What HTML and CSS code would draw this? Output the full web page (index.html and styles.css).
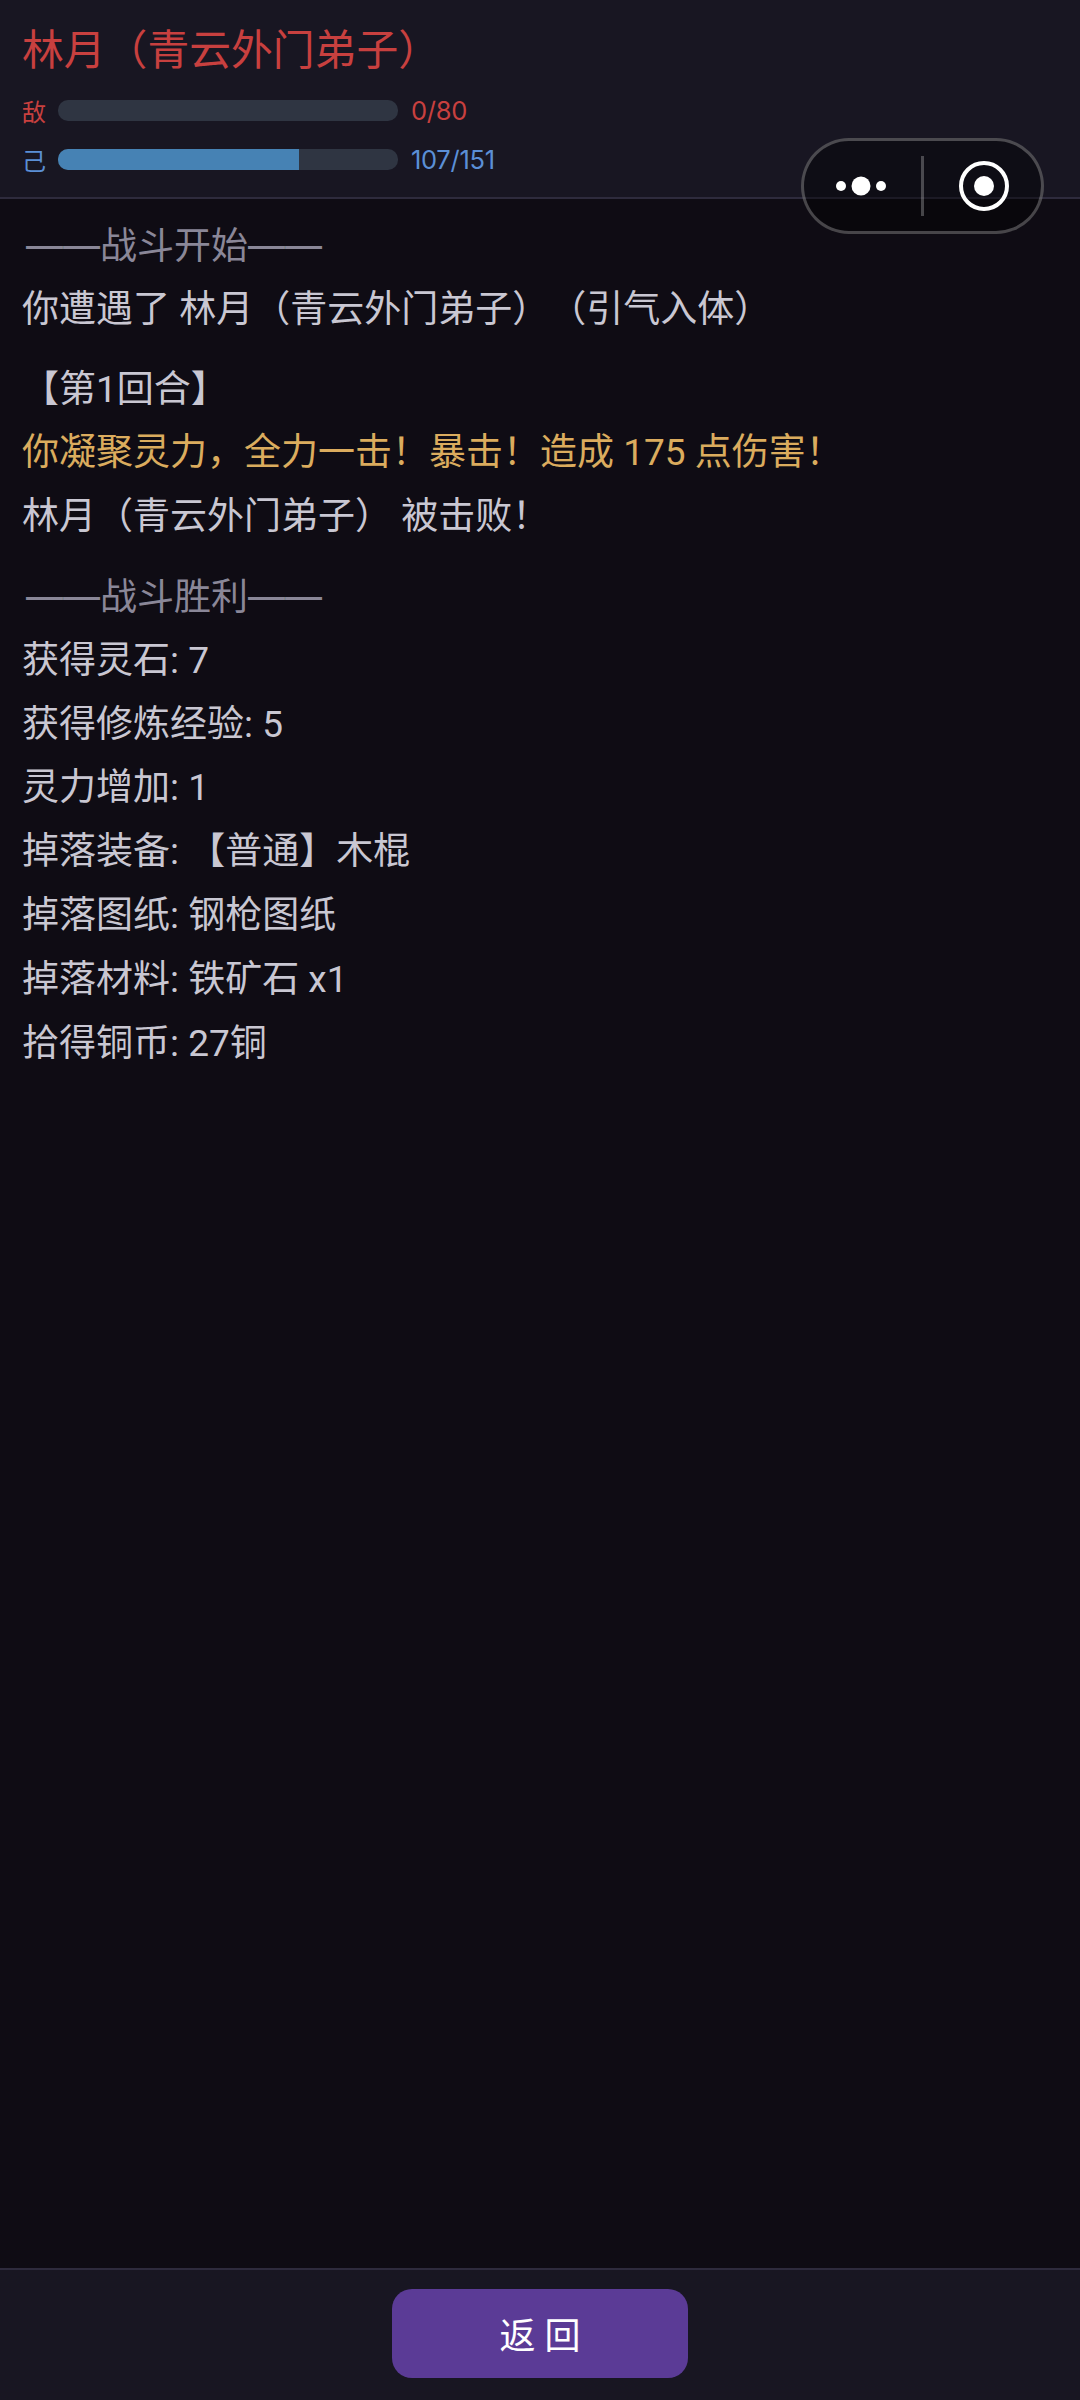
FILE: index.html
```html
<!DOCTYPE html>
<html lang="zh-CN">
<head>
    <meta charset="UTF-8">
    <meta name="viewport" content="width=device-width, initial-scale=1.0">
    <title>战斗</title>
    <link rel="stylesheet" href="styles.css">
</head>
<body>

    <div class="battle-page">
        <div class="enemy-header">
            <div class="enemy-name">林月（青云外门弟子）</div>
            <div class="hp-row enemy-row">
                <span class="hp-label">敌</span>
                <div class="hp-bar"></div>
                <span class="hp-value">0/80</span>
            </div>
            <div class="hp-row player-row">
                <span class="hp-label">己</span>
                <div class="hp-bar"><div class="hp-fill" style="width: 70.9%"></div></div>
                <span class="hp-value">107/151</span>
            </div>
        </div>

        <div class="capsule">
            <svg class="capsule-more" width="52" height="20" viewBox="0 0 52 20">
                <circle cx="6" cy="10" r="5" fill="#fff"/>
                <circle cx="26" cy="10" r="9.5" fill="#fff"/>
                <circle cx="46" cy="10" r="5" fill="#fff"/>
            </svg>
            <div class="capsule-line"></div>
            <svg class="capsule-close" width="50" height="50" viewBox="0 0 50 50">
                <circle cx="25" cy="25" r="23" fill="none" stroke="#fff" stroke-width="4"/>
                <circle cx="25" cy="25" r="10" fill="#fff"/>
            </svg>
        </div>

        <div class="log">
            <div class="log-block">
                <div class="log-line divider">——战斗开始——</div>
                <div class="log-line">你遭遇了 林月（青云外门弟子）（引气入体）</div>
            </div>
            <div class="log-block">
                <div class="log-line">【第1回合】</div>
                <div class="log-line crit">你凝聚灵力，全力一击！暴击！造成 175 点伤害！</div>
                <div class="log-line">林月（青云外门弟子） 被击败！</div>
            </div>
            <div class="log-block">
                <div class="log-line divider">——战斗胜利——</div>
                <div class="log-line">获得灵石: 7</div>
                <div class="log-line">获得修炼经验: 5</div>
                <div class="log-line">灵力增加: 1</div>
                <div class="log-line">掉落装备: 【普通】木棍</div>
                <div class="log-line">掉落图纸: 钢枪图纸</div>
                <div class="log-line">掉落材料: 铁矿石 x1</div>
                <div class="log-line">拾得铜币: 27铜</div>
            </div>
        </div>

        <div class="footer">
            <button class="back-btn">返 回</button>
        </div>
    </div>

</body>
</html>
```

FILE: styles.css
```css
body {
    margin: 0;
    font-family: 'Roboto', 'Noto Sans CJK SC', sans-serif;
    background-color: #0f0c14;
    text-spacing-trim: space-all;
}

.battle-page {
    position: relative;
    display: flex;
    flex-direction: column;
    width: 1080px;
    height: 2400px;
    overflow: hidden;
}

.enemy-header {
    box-sizing: border-box;
    height: 199px;
    padding: 22px 22px 0;
    background-color: #181622;
    border-bottom: 2px solid #2e2b3d;
}

.enemy-name {
    font-size: 41.8px;
    line-height: 58px;
    color: #c8403f;
    margin-bottom: 13px;
}

.hp-row {
    display: flex;
    align-items: center;
    height: 34px;
    margin-bottom: 15px;
}

.hp-label {
    width: 36px;
    font-size: 24px;
}

.hp-bar {
    width: 340px;
    height: 21px;
    margin-right: 13px;
    border-radius: 10px;
    background-color: #2f3542;
    overflow: hidden;
}

.hp-fill {
    height: 100%;
    background-color: #4682b4;
}

.hp-value {
    font-family: 'Inter', sans-serif;
    font-size: 25.5px;
    letter-spacing: -0.3px;
}

.enemy-row {
    color: #c8403f;
}

.player-row {
    color: #5b8fd6;
}

/* wechat capsule sits over the header */
.capsule {
    position: absolute;
    top: 138px;
    left: 801px;
    box-sizing: border-box;
    display: flex;
    align-items: center;
    width: 243px;
    height: 96px;
    border: 3px solid rgba(255, 255, 255, 0.25);
    border-radius: 48px;
    background-color: rgba(0, 0, 0, 0.38);
}

.capsule-more {
    margin-left: 31px;
}

.capsule-line {
    width: 3px;
    height: 60px;
    margin-left: 34px;
    background-color: rgba(255, 255, 255, 0.25);
}

.capsule-close {
    margin-left: 35px;
}

.log {
    flex: 1;
    padding: 15px 22px 0;
    color: #c9c7d2;
}

.log-block {
    margin-bottom: 16px;
}

.log-line {
    font-size: 37px;
    line-height: 63.8px;
}

/* roboto's dash is too short, inter's is the right length */
.divider {
    font-family: 'Inter', 'Noto Sans CJK SC', sans-serif;
    color: #8a8798;
    padding-left: 4px;
}

.crit {
    color: #dbac5e;
}

.footer {
    box-sizing: border-box;
    display: flex;
    justify-content: center;
    height: 132px;
    padding-top: 19px;
    background-color: #181622;
    border-top: 2px solid #2e2b3d;
}

.back-btn {
    width: 296px;
    height: 89px;
    padding: 0 0 2px;
    border: none;
    border-radius: 20px;
    background-color: #5b3b96;
    color: white;
    font-family: inherit;
    font-size: 36px;
}
```
